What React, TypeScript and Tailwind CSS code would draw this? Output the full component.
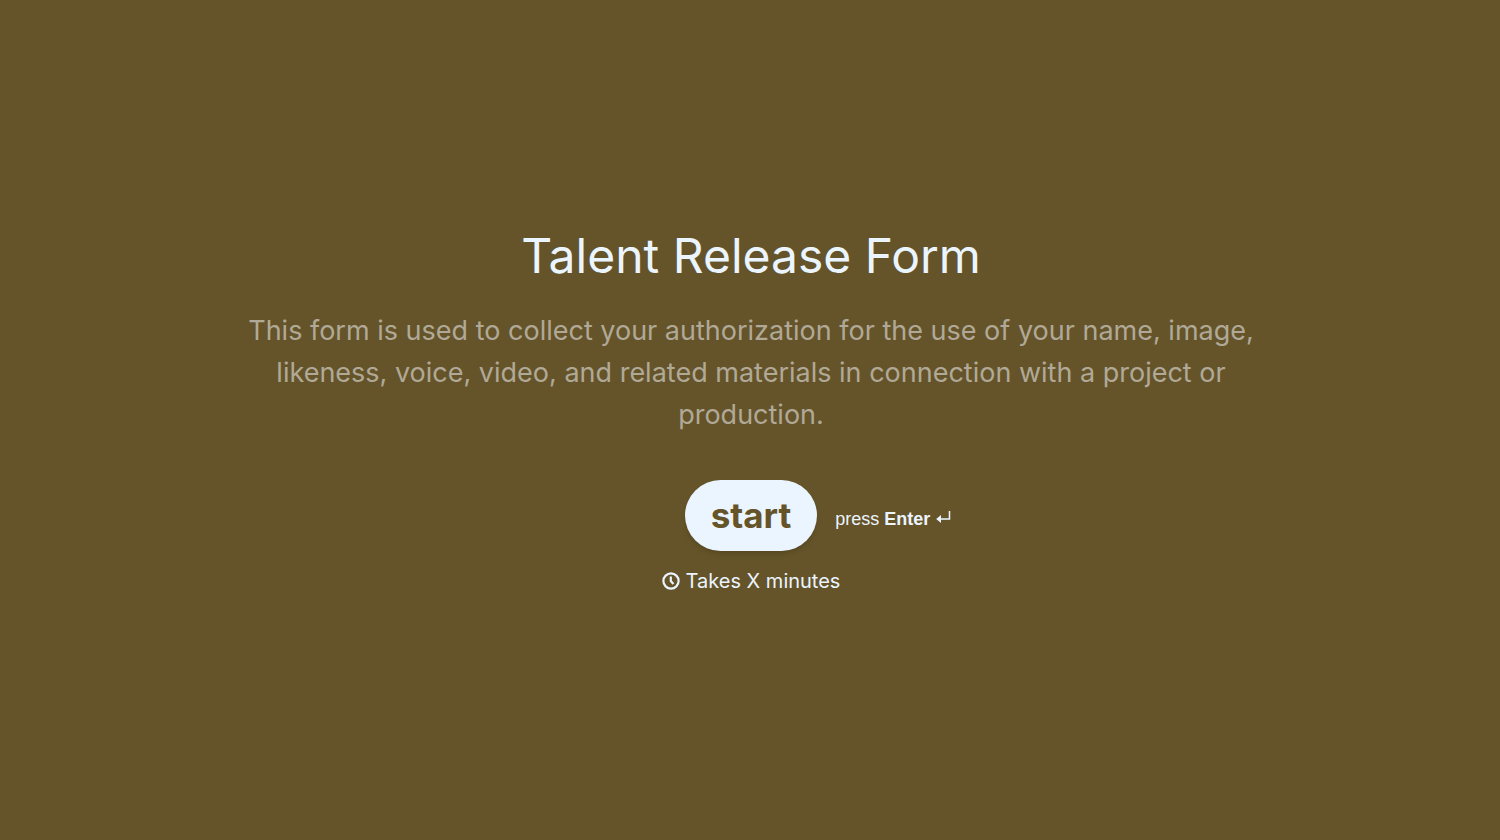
import { useEffect } from "react";

function ClockIcon() {
  return (
    <svg
      width="18"
      height="18"
      viewBox="0 0 18 18"
      fill="none"
      stroke="currentColor"
      strokeWidth="2.2"
      aria-hidden="true"
    >
      <circle cx="9" cy="9" r="7.6" />
      <path d="M8.8 4.6V9l2.6 3" />
    </svg>
  );
}

function EnterIcon() {
  return (
    <svg
      width="15"
      height="16"
      viewBox="0 0 15 16"
      fill="none"
      stroke="currentColor"
      strokeWidth="1.5"
      aria-hidden="true"
    >
      <path d="M13.5 0v8H3" />
      <path d="M5 4v8L0.2 8z" fill="currentColor" stroke="none" />
    </svg>
  );
}

export default function App() {
  const handleStart = () => {};

  useEffect(() => {
    const onKeyDown = (e: KeyboardEvent) => {
      if (e.key === "Enter") handleStart();
    };
    window.addEventListener("keydown", onKeyDown);
    return () => window.removeEventListener("keydown", onKeyDown);
  }, []);

  return (
    <main className="min-h-screen flex flex-col items-center justify-center bg-[#655429] text-[#ebf5ff] font-['Inter',sans-serif] pl-[26px] pr-6 pb-5">
      <div className="w-full max-w-[1040px] flex flex-col items-center text-center">
        <h1 className="text-[48px] leading-[60px]">Talent Release Form</h1>
        <p className="mt-6 text-[27px] leading-[42px] text-[#b0a997]">
          This form is used to collect your authorization for the use of your
          name, image, likeness, voice, video, and related materials in
          connection with a project or production.
        </p>

        {/* Start action */}
        <div className="mt-11 w-full grid grid-cols-[1fr_auto_1fr] items-center gap-[18px]">
          <button
            type="button"
            onClick={handleStart}
            className="col-start-2 h-[71px] px-[26px] rounded-full bg-[#ebf5ff] text-[#655429] text-[35px] font-bold shadow-md"
          >
            start
          </button>
          <div className="flex items-center gap-1.5 pt-2 text-[18px] font-['Liberation_Sans',sans-serif]">
            <span>
              press <strong>Enter</strong>
            </span>
            <EnterIcon />
          </div>
        </div>

        <div className="mt-4 flex items-center gap-1.5 text-[20px] leading-7">
          <ClockIcon />
          <span>Takes X minutes</span>
        </div>
      </div>
    </main>
  );
}
